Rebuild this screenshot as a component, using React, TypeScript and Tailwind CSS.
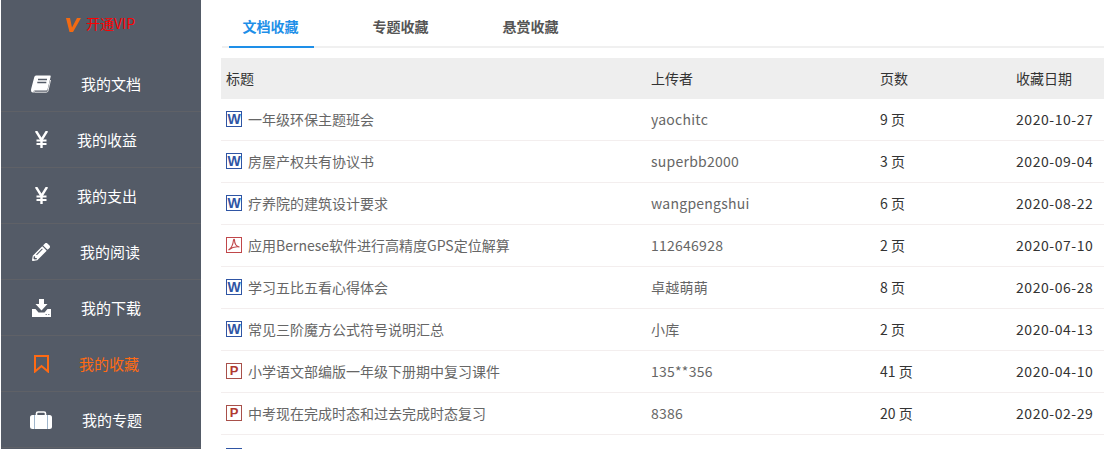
import { FaPencilAlt } from 'react-icons/fa';
import type { ReactNode } from 'react';

const menu: { label: string; icon: ReactNode; textClass: string; active?: boolean }[] = [
  { label: '我的文档', icon: <BookIcon />, textClass: 'ml-[80px]' },
  { label: '我的收益', icon: <YenIcon />, textClass: 'ml-[76px]' },
  { label: '我的支出', icon: <YenIcon />, textClass: 'ml-[76px]' },
  { label: '我的阅读', icon: <FaPencilAlt size={18} />, textClass: 'ml-[79px]' },
  { label: '我的下载', icon: <DownloadIcon />, textClass: 'ml-[80px]' },
  { label: '我的收藏', icon: <BookmarkIcon />, textClass: 'ml-[78px]', active: true },
  { label: '我的专题', icon: <CaseIcon />, textClass: 'ml-[81px]' },
];

const rows = [
  { type: 'w', title: '一年级环保主题班会', user: 'yaochitc', pages: '9 页', date: '2020-10-27' },
  { type: 'w', title: '房屋产权共有协议书', user: 'superbb2000', pages: '3 页', date: '2020-09-04' },
  { type: 'w', title: '疗养院的建筑设计要求', user: 'wangpengshui', pages: '6 页', date: '2020-08-22' },
  { type: 'pdf', title: '应用Bernese软件进行高精度GPS定位解算', user: '112646928', pages: '2 页', date: '2020-07-10' },
  { type: 'w', title: '学习五比五看心得体会', user: '卓越萌萌', pages: '8 页', date: '2020-06-28' },
  { type: 'w', title: '常见三阶魔方公式符号说明汇总', user: '小库', pages: '2 页', date: '2020-04-13' },
  { type: 'p', title: '小学语文部编版一年级下册期中复习课件', user: '135**356', pages: '41 页', date: '2020-04-10' },
  { type: 'p', title: '中考现在完成时态和过去完成时态复习', user: '8386', pages: '20 页', date: '2020-02-29' },
];

function BookIcon() {
  return (
    <svg width="20" height="18" viewBox="0 0 20 18">
      <path d="M5 .5h14q1 0 .7 1L16.5 14.5q-.3 1-1.3 1H4q-1.5 0-1.5 1t1.5 1H1.8Q0 17.5 0 15.2q0-1 .4-2.2L3.3 2Q3.7.5 5 .5z" fill="#fff" />
      <path d="M7 4.5h9M6.3 7.5h9" stroke="#545b67" strokeWidth="1.3" />
      <path d="M3 15.7q-.4 1.3 1 1.5h11.5q1 0 1.4-1L19.5 5" stroke="#e8e8e8" strokeWidth="1" fill="none" />
    </svg>
  );
}

function YenIcon() {
  return (
    <svg width="13" height="17" viewBox="0 0 13 17" fill="none" stroke="#fff" strokeWidth="2.4">
      <path d="M1 0l5.5 9L12 0" />
      <path d="M6.5 8v9" />
      <path d="M1.5 9.5h10M1.5 13h10" strokeWidth="1.8" />
    </svg>
  );
}

function DownloadIcon() {
  return (
    <svg width="19" height="18" viewBox="0 0 19 18">
      <path d="M7 0h5v5h3.5L9.5 11.5 3.5 5H7z" fill="#fff" />
      <path d="M0 10h3.5l3 3.5h6l3-3.5H19v8H0z" fill="#fff" />
      <path d="M13.5 15.5h1.5M16 15.5h1.5" stroke="#8a909a" strokeWidth="1.2" />
    </svg>
  );
}

function BookmarkIcon() {
  return (
    <svg width="15" height="18" viewBox="0 0 15 18" fill="none" stroke="currentColor" strokeWidth="2">
      <path d="M1 1h13v15.5l-6.5-5.5L1 16.5z" />
    </svg>
  );
}

function CaseIcon() {
  return (
    <svg width="22" height="18" viewBox="0 0 22 18">
      <path d="M6.5 5V2.5Q6.5 1 8 1h6q1.5 0 1.5 1.5V5" stroke="#fff" strokeWidth="1.6" fill="none" />
      <rect x="0" y="4" width="22" height="14" rx="2.5" fill="#fff" />
      <path d="M4.5 4v14M17.5 4v14" stroke="#9fb6cc" strokeWidth="1" />
    </svg>
  );
}

function VipIcon() {
  return (
    <svg width="15" height="14" viewBox="0 0 15 14" className="mr-[5px]">
      <path d="M0 0h4l2 9.5L11 0h4L7 14H3.500z" fill="#f26a12" />
    </svg>
  );
}

function DocIcon({ type }: { type: string }) {
  if (type === 'pdf') {
    return (
      <svg width="16" height="16" viewBox="0 0 16 16" fill="none" className="shrink-0">
        <rect x="0.5" y="0.5" width="15" height="15" fill="#fff" stroke="#c0474a" />
        <path d="M2.5 13C5 11.5 7 8 7.5 3c.2-1 1-1 1 0 0 4 2.5 6.5 5 7-3-.5-7 0-11 3z" stroke="#c0474a" strokeWidth="1.1" />
      </svg>
    );
  }
  const isWord = type === 'w';
  return (
    <span
      className={
        isWord
          ? "flex h-4 w-4 shrink-0 items-center justify-center border border-[#2f55a4] font-['Liberation_Sans',sans-serif] text-[14px] leading-none font-bold text-[#2f55a4]"
          : "flex h-4 w-4 shrink-0 items-center justify-center border border-[#a8504a] font-['Liberation_Sans',sans-serif] text-[13px] leading-none font-bold text-[#b0392f]"
      }
    >
      {isWord ? 'W' : 'P'}
    </span>
  );
}

export default function App() {
  return (
    <div className="flex h-[449px] w-[1104px] overflow-hidden bg-white pl-px font-['Noto_Sans_CJK_SC',sans-serif] text-sm">
      <aside className="w-[200px] shrink-0 bg-[#545b67] text-white">
        <div className="flex h-[56px] items-start pt-[18px] pl-[65px]">
          <VipIcon />
          <span className="-mt-[6px] text-sm leading-[22px] text-[#ff0000]">开通VIP</span>
        </div>
        {menu.map((item) => (
          <div
            key={item.label}
            className={
              item.active
                ? 'relative flex h-[56px] items-center border-b border-[#5f6167] text-[15px] text-[#ff6a13]'
                : 'relative flex h-[56px] items-center border-b border-[#5f6167] text-[15px]'
            }
          >
            <span className="absolute left-[29px] flex w-[22px] justify-center">{item.icon}</span>
            <span className={item.textClass}>{item.label}</span>
          </div>
        ))}
      </aside>

      <main className="min-w-0 flex-1 pl-5">
        <nav className="ml-px flex h-[48px] border-b-2 border-[#f0f0f0] font-bold">
          <div className="ml-[7px] flex h-[48px] w-[85px] items-center justify-center border-b-2 border-[#1e8fe8] pt-[6px] pr-[2px] text-[#1e8fe8]">文档收藏</div>
          <div className="ml-[44px] flex h-[46px] w-[85px] items-center justify-center pt-[6px] text-[#555]">专题收藏</div>
          <div className="ml-[45px] flex h-[46px] w-[85px] items-center justify-center pt-[6px] text-[#555]">悬赏收藏</div>
        </nav>

        <div className="mt-[10px] grid h-[41px] grid-cols-[425px_229px_136px_1fr] items-center bg-[#eeeeee] pb-[2px] pl-[5px] text-[#333]">
          <span>标题</span>
          <span>上传者</span>
          <span>页数</span>
          <span>收藏日期</span>
        </div>

        {rows.map((row) => (
          <div
            key={row.title}
            className="grid h-[42px] grid-cols-[425px_229px_136px_1fr] items-center border-b border-[#f3eeee] pb-[2px] pl-[5px] text-[#666]"
          >
            <span className="flex items-center gap-[6px]">
              <DocIcon type={row.type} />
              {row.title}
            </span>
            <span className="tracking-[0.25px]">{row.user}</span>
            <span className="text-[#333]">{row.pages}</span>
            <span className="tracking-[0.55px] text-[#333]">{row.date}</span>
          </div>
        ))}
        <div className="mt-[13px] ml-[5px] h-4 w-4 border border-[#2f55a4]" />
      </main>
    </div>
  );
}
